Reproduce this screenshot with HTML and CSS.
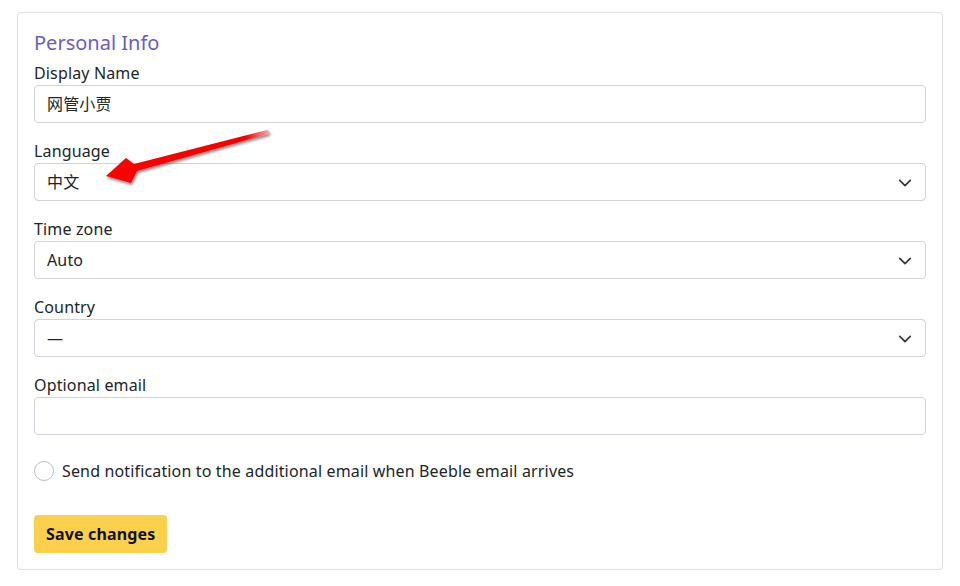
FILE: index.html
```html
<!DOCTYPE html>
<html lang="en">
<head>
<meta charset="utf-8">
<title>Personal Info</title>
<link rel="stylesheet" href="styles.css">
</head>
<body>
<div class="card">
  <h2 class="title">Personal Info</h2>
  <div class="field">
    <label class="label">Display Name</label>
    <div class="control">网管小贾</div>
  </div>
  <div class="field">
    <label class="label">Language</label>
    <div class="control select">中文<span class="chev"><svg width="16" height="16" viewBox="0 0 16 16"><path d="M2 5l6 6 6-6" fill="none" stroke="#343a40" stroke-width="2" stroke-linecap="round" stroke-linejoin="round"/></svg></span></div>
  </div>
  <div class="field">
    <label class="label">Time zone</label>
    <div class="control select">Auto<span class="chev"><svg width="16" height="16" viewBox="0 0 16 16"><path d="M2 5l6 6 6-6" fill="none" stroke="#343a40" stroke-width="2" stroke-linecap="round" stroke-linejoin="round"/></svg></span></div>
  </div>
  <div class="field">
    <label class="label">Country</label>
    <div class="control select">—<span class="chev"><svg width="16" height="16" viewBox="0 0 16 16"><path d="M2 5l6 6 6-6" fill="none" stroke="#343a40" stroke-width="2" stroke-linecap="round" stroke-linejoin="round"/></svg></span></div>
  </div>
  <div class="field">
    <label class="label">Optional email</label>
    <div class="control"></div>
  </div>
  <div class="check">
    <span class="circle"></span>
    <span class="check-text">Send notification to the additional email when Beeble email arrives</span>
  </div>
  <button class="btn">Save changes</button>
  <svg class="arrow" width="960" height="586" viewBox="0 0 960 586">
    <defs>
      <filter id="sh" x="-20%" y="-50%" width="140%" height="200%">
        <feGaussianBlur in="SourceAlpha" stdDeviation="1.8"/>
        <feOffset dx="1" dy="2" result="b"/>
        <feComponentTransfer><feFuncA type="linear" slope="0.5"/></feComponentTransfer>
        <feMerge><feMergeNode/><feMergeNode in="SourceGraphic"/></feMerge>
      </filter>
      <linearGradient id="g" gradientUnits="userSpaceOnUse" x1="107" y1="176" x2="270" y2="131">
        <stop offset="0" stop-color="#ff0000"/>
        <stop offset="0.85" stop-color="#f40000"/>
        <stop offset="1" stop-color="#ffb0b0"/>
      </linearGradient>
    </defs>
    <polygon filter="url(#sh)" fill="url(#g)" points="106,176 126,158 134,164 267,130 270,132 268,134 137,171 131,183"/>
  </svg>
</div>
</body>
</html>
```

FILE: styles.css
```css
* { box-sizing: border-box; }
html, body { margin: 0; padding: 0; background: #fff; }
body {
  font-family: "Noto Sans", "Noto Sans CJK SC", sans-serif;
  font-size: 16px;
  letter-spacing: 0.15px;
  color: #212529;
  width: 960px;
  height: 586px;
  overflow: hidden;
}
.card {
  position: relative;
  margin: 12px 17px 0 17px;
  width: 926px;
  border: 1px solid #dee2e6;
  border-radius: 4px;
  padding: 17px 16px 16px 16px;
}
.title {
  margin: 0 0 5px 0;
  font-size: 20px;
  font-weight: 400;
  line-height: 26px;
  letter-spacing: 0;
  color: #6a5cc9;
}
.field { margin-bottom: 16px; }
.label {
  display: block;
  line-height: 24px;
  height: 24px;
}
.control {
  position: relative;
  height: 38px;
  border: 1px solid #ced4da;
  border-radius: 4px;
  padding: 0 12px;
  line-height: 36px;
}
.chev {
  position: absolute;
  right: 12px;
  top: 11px;
  width: 16px;
  height: 16px;
  display: flex;
}
.chev svg { width: 14px; height: 14px; margin: 1px; }
.check {
  display: flex;
  align-items: center;
  gap: 8px;
  margin-top: 24px;
  height: 24px;
}
.circle {
  width: 20px;
  height: 20px;
  border: 1px solid #b9bec4;
  border-radius: 50%;
  flex: none;
}
.btn {
  margin-top: 32px;
  display: block;
  height: 38px;
  padding: 0 12px;
  border: 0;
  border-radius: 4px;
  background: #fcd04d;
  color: #111;
  font-family: inherit;
  font-size: 16px;
  font-weight: 700;
  letter-spacing: 0.15px;
}
.arrow {
  position: absolute;
  left: -18px;
  top: -13px;
  pointer-events: none;
}
```
